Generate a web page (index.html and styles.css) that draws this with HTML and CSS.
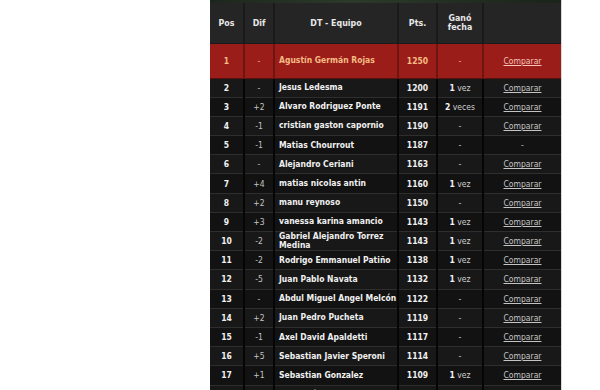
FILE: index.html
```html
<!DOCTYPE html>
<html>
<head>
<meta charset="utf-8">
<link rel="stylesheet" href="styles.css">
</head>
<body>
<div class="page">
  <div class="board">
    <div class="topbar"></div>
    <table class="ranking">
      <colgroup>
        <col class="c-pos"><col class="c-dif"><col class="c-name"><col class="c-pts"><col class="c-won"><col class="c-cmp">
      </colgroup>
      <thead>
        <tr><th>Pos</th><th>Dif</th><th>DT - Equipo</th><th>Pts.</th><th>Ganó<br>fecha</th><th></th></tr>
      </thead>
      <tbody>
        <tr class="leader"><td class="pos">1</td><td class="dif">-</td><td class="name">Agustín Germán Rojas</td><td class="pts">1250</td><td class="won">-</td><td class="cmp"><a href="#">Comparar</a></td></tr>
        <tr><td class="pos">2</td><td class="dif">-</td><td class="name">Jesus Ledesma</td><td class="pts">1200</td><td class="won"><b>1</b> vez</td><td class="cmp"><a href="#">Comparar</a></td></tr>
        <tr><td class="pos">3</td><td class="dif">+2</td><td class="name">Alvaro Rodriguez Ponte</td><td class="pts">1191</td><td class="won"><b>2</b> veces</td><td class="cmp"><a href="#">Comparar</a></td></tr>
        <tr><td class="pos">4</td><td class="dif">-1</td><td class="name">cristian gaston capornio</td><td class="pts">1190</td><td class="won">-</td><td class="cmp"><a href="#">Comparar</a></td></tr>
        <tr><td class="pos">5</td><td class="dif">-1</td><td class="name">Matias Chourrout</td><td class="pts">1187</td><td class="won">-</td><td class="cmp">-</td></tr>
        <tr><td class="pos">6</td><td class="dif">-</td><td class="name">Alejandro Ceriani</td><td class="pts">1163</td><td class="won">-</td><td class="cmp"><a href="#">Comparar</a></td></tr>
        <tr><td class="pos">7</td><td class="dif">+4</td><td class="name">matias nicolas antin</td><td class="pts">1160</td><td class="won"><b>1</b> vez</td><td class="cmp"><a href="#">Comparar</a></td></tr>
        <tr><td class="pos">8</td><td class="dif">+2</td><td class="name">manu reynoso</td><td class="pts">1150</td><td class="won">-</td><td class="cmp"><a href="#">Comparar</a></td></tr>
        <tr><td class="pos">9</td><td class="dif">+3</td><td class="name">vanessa karina amancio</td><td class="pts">1143</td><td class="won"><b>1</b> vez</td><td class="cmp"><a href="#">Comparar</a></td></tr>
        <tr><td class="pos">10</td><td class="dif">-2</td><td class="name">Gabriel Alejandro Torrez<br>Medina</td><td class="pts">1143</td><td class="won"><b>1</b> vez</td><td class="cmp"><a href="#">Comparar</a></td></tr>
        <tr><td class="pos">11</td><td class="dif">-2</td><td class="name">Rodrigo Emmanuel Patiño</td><td class="pts">1138</td><td class="won"><b>1</b> vez</td><td class="cmp"><a href="#">Comparar</a></td></tr>
        <tr><td class="pos">12</td><td class="dif">-5</td><td class="name">Juan Pablo Navata</td><td class="pts">1132</td><td class="won"><b>1</b> vez</td><td class="cmp"><a href="#">Comparar</a></td></tr>
        <tr><td class="pos">13</td><td class="dif">-</td><td class="name">Abdul Miguel Angel Melcón</td><td class="pts">1122</td><td class="won">-</td><td class="cmp"><a href="#">Comparar</a></td></tr>
        <tr><td class="pos">14</td><td class="dif">+2</td><td class="name">Juan Pedro Pucheta</td><td class="pts">1119</td><td class="won">-</td><td class="cmp"><a href="#">Comparar</a></td></tr>
        <tr><td class="pos">15</td><td class="dif">-1</td><td class="name">Axel David Apaldetti</td><td class="pts">1117</td><td class="won">-</td><td class="cmp"><a href="#">Comparar</a></td></tr>
        <tr><td class="pos">16</td><td class="dif">+5</td><td class="name">Sebastian Javier Speroni</td><td class="pts">1114</td><td class="won">-</td><td class="cmp"><a href="#">Comparar</a></td></tr>
        <tr><td class="pos">17</td><td class="dif">+1</td><td class="name">Sebastian Gonzalez</td><td class="pts">1109</td><td class="won"><b>1</b> vez</td><td class="cmp"><a href="#">Comparar</a></td></tr>
        <tr><td class="pos">18</td><td class="dif">-</td><td class="name">Pablo Pérez</td><td class="pts">1105</td><td class="won">-</td><td class="cmp"><a href="#">Comparar</a></td></tr>
      </tbody>
    </table>
  </div>
</div>
</body>
</html>
```
FILE: styles.css
```css
html, body {
  margin: 0;
  padding: 0;
  background: #ffffff;
  overflow: hidden;
}
.page {
  height: 390px;
  overflow: hidden;
  padding-left: 210px;
}
.board {
  width: 351px;
  background: #141414;
  border-right: 1px solid #d8d8d8;
}
.topbar {
  height: 3px;
  background: linear-gradient(90deg, #1d261d, #2c3a2a 40%, #1b231b);
}
.ranking {
  width: 351px;
  border-collapse: collapse;
  table-layout: fixed;
  font-family: "DejaVu Sans", Tahoma, sans-serif;
  font-stretch: condensed;
  font-size: 8.5px;
  color: #e6e6e6;
}
.c-pos { width: 34px; }
.c-dif { width: 30px; }
.c-name { width: 124px; }
.c-pts { width: 39px; }
.c-won { width: 46px; }
.c-cmp { width: 78px; }
.ranking th {
  height: 40px;
  padding: 0;
  background: #252525;
  border-left: 2px solid #1a1a1a;
  border-bottom: 1px solid #1a1a1a;
  font-weight: bold;
  font-size: 8.8px;
  color: #e8e8e8;
  text-align: center;
  vertical-align: middle;
  line-height: 9px;
}
.ranking th:first-child { border-left: none; }
.ranking td {
  height: 18.2px;
  padding: 0 3px;
  border-left: 2px solid #050505;
  border-bottom: 1px solid #2e2e2e;
  text-align: center;
  vertical-align: middle;
  line-height: 8px;
  white-space: nowrap;
  overflow: visible;
}
.ranking td:first-child { border-left: none; }
.ranking tbody tr:nth-child(even) td { background: #181818; }
.ranking tbody tr:nth-child(odd) td { background: #121212; }
.ranking td.pos, .ranking td.name, .ranking td.pts { font-weight: bold; color: #f0f0f0; }
.ranking td.name { text-align: left; padding-left: 4px; line-height: 9px; }
.ranking td.dif { color: #c4c4c4; }
.ranking td.won { color: #cfcfcf; }
.ranking td.won b { color: #f2f2f2; }
.ranking td.cmp { color: #bdbdbd; }
.ranking td.cmp a { color: #c4c4c4; text-decoration: underline; }
.ranking tbody tr.leader td {
  height: 33.5px;
  background: #9a1d1a;
  border-left-color: #6e1411;
  border-bottom: 1px solid #5a100e;
  color: #f5bb85;
}
.ranking tbody tr.leader td:first-child { border-left: none; }
.ranking tbody tr.leader td.cmp a { color: #f3c3b8; }
```
